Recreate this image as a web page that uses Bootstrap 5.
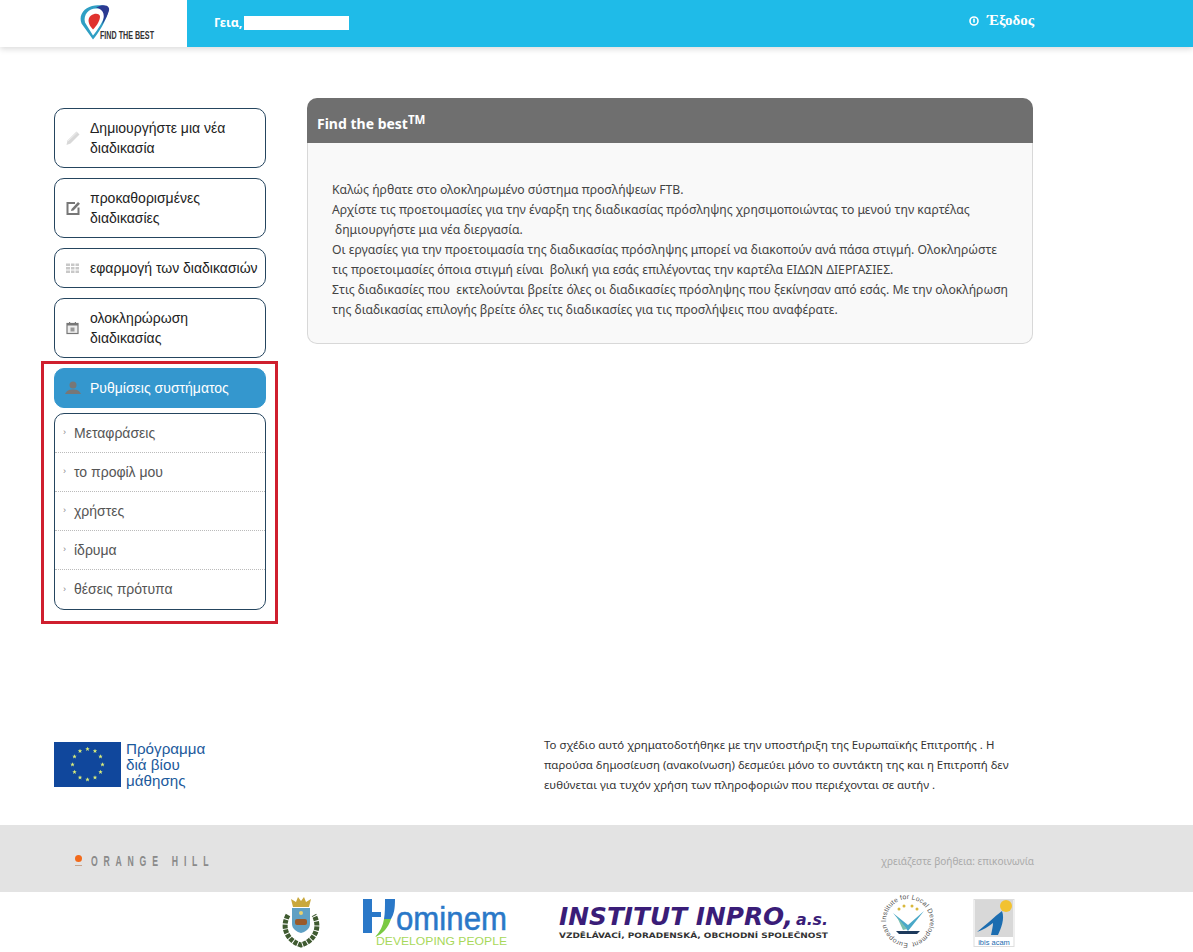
<!DOCTYPE html>
<html lang="el">
<head>
    <meta charset="UTF-8">
    <title>Find the best</title>
    <meta name="viewport" content="width=device-width, initial-scale=1">
    <link href="https://cdn.jsdelivr.net/npm/bootstrap@5.3.3/dist/css/bootstrap.min.css" rel="stylesheet">
    <style>
        body { background: #fff; font-family: "Liberation Sans", Arial, sans-serif; color: #333; }
        .top-bar { height: 47px; background: #1fbbe8; box-shadow: 0 2px 6px rgb(0 0 0 / 0.15); }
        .top-logo { width: 187px; background: #fff; padding-left: 79px; }
        .top-hello { padding: 0 0 2px 27px; width: 782px; color: #fff; font: bold 12.5px "Noto Sans", sans-serif; }
        .hello-mask { width: 105px; height: 14px; background: #fff; margin-left: 2px; }
        .top-exit { color: #fff; font: bold 15px "Liberation Serif", serif; text-decoration: none; gap: 8px; padding-bottom: 6px; }
        .page-main { padding: 61px 0 0 54px; gap: 41px; height: 693px; }
        .side-col { width: 212px; }
        .side-link { border: 1px solid #25455f; border-radius: 10px; min-height: 40px; padding: 9px 8px 9px 10px; margin-top: 10px; color: #222; font-size: 14px; line-height: 20px; text-decoration: none; background: #fff; }
        .side-link:first-child { margin-top: 0; }
        .side-link.is-open { background: #3497ce; border-color: #3497ce; color: #fff; }
        .side-ico { width: 16px; flex: none; margin-right: 9px; }
        .side-group { position: relative; margin-top: 10px; }
        .side-group .side-link { margin-top: 0; }
        .red-box { position: absolute; left: -13px; right: -12px; top: -7px; bottom: -14px; border: 3px solid #cf1f2e; pointer-events: none; }
        .sub-menu { border: 1px solid #25455f; border-radius: 10px; margin-top: 5px; overflow: hidden; }
        .sub-item { height: 39px; padding-left: 19px; font-size: 14px; color: #555; border-bottom: 1px dotted #bbb; position: relative; text-decoration: none; }
        .sub-item:last-child { border-bottom: 0; }
        .sub-item::before { content: "›"; position: absolute; left: 8px; font-size: 9px; color: #888; }
        .info-panel { width: 726px; height: 246px; margin-top: -10px; }
        .info-head { height: 45px; background: #6f6f6f; color: #fff; padding: 0 10px; border-radius: 10px 10px 0 0; font: bold 14px/51px "Noto Sans", sans-serif; }
        .info-head sup { font-size: 11.5px; top: -5px; }
        .info-text { height: 201px; padding: 37px 23px 0 24px; border: 1px solid #d8d8d8; border-top: 0; border-radius: 0 0 10px 10px; background: #f9f9f9; font: 12.2px/20px "Noto Sans", sans-serif; color: #444; }
        .info-text p { margin: 0; }
        .lead-in { padding-left: 3px; }
        .eu-row { padding-left: 54px; height: 85px; }
        .eu-logo { width: 152px; height: 50px; flex: none; }
        .eu-text { width: 470px; margin-left: 338px; margin-top: -5px; font: 11.4px/20px "Noto Sans", sans-serif; color: #333; }
        .grey-band { height: 67px; background: #e3e3e3; padding: 0 159px 0 75px; }
        .oh-name { font: bold 14px "Liberation Sans", sans-serif; letter-spacing: 9.3px; color: #8a8a8a; display: inline-block; transform: scaleX(.62); transform-origin: left; padding-top: 4px; white-space: nowrap; }
        .oh-dot { width: 7px; height: 7px; border-radius: 50%; background: #f26a1b; margin-right: 9px; position: relative; flex: none; }
        .oh-dot::after { content: ""; position: absolute; left: 0; top: 10px; width: 7px; height: 1px; background: #c9a58c; }
        .help-link { font: 10px "Noto Sans", sans-serif; color: #aaa; text-decoration: none; padding-top: 4px; }
        .logo-row { height: 60px; }
    </style>
</head>
<body>
<!-- top bar -->
<div class="top-bar d-flex">
    <div class="top-logo d-flex align-items-start">
        <svg width="100" height="47" viewBox="0 0 100 47">
            <g transform="translate(0 2.5)">
                <path d="M14 37 L2.5 21 C-1 12 6 4 16 3 C24 2 31 3 29 10 C27 18 20 30 14 37Z" fill="#2f9fc4"/>
                <path d="M14 33 L6 20 C4 12 10 6 17 6 C24 6 28 7 26 12 C24 19 19 27 14 33Z" fill="#fff"/>
                <path d="M22 3 C29 2 32 5 29 11 C27 16 25 19 23 22 C26 14 26 7 17 5Z" fill="#2b3a92"/>
                <path d="M14 27 C9 22 8 16 12 13 C16 10 21 11 21 14 C21 18 18 23 14 27Z" fill="#e0322e"/>
            </g>
            <text x="21" y="39" font-family="Liberation Sans" font-size="10" font-weight="bold" fill="#333" textLength="54" lengthAdjust="spacingAndGlyphs">FIND THE BEST</text>
        </svg>
    </div>
    <div class="top-hello d-flex align-items-center">Γεια,<span class="hello-mask d-inline-block"></span></div>
    <a href="#" class="top-exit d-flex align-items-center">
        <svg width="10" height="10" viewBox="0 0 10 10"><circle cx="5" cy="5" r="4" fill="none" stroke="#fff" stroke-width="1.6"/><rect x="4.2" y="2.6" width="1.6" height="4" fill="#fff"/></svg>
        Έξοδος
    </a>
</div>

<div class="page-main d-flex">
    <div class="side-col">
        <div class="d-flex flex-column">
        <a href="#" class="side-link d-flex align-items-center">
            <svg class="side-ico" height="16" viewBox="0 0 16 16"><path d="M1.5 15 L2.5 10.5 L11.5 1.5 L14.5 4.5 L5.5 13.5Z" fill="#d8d8d8"/><path d="M3 11 L12 2.5" stroke="#eee"/></svg>
            <span>Δημιουργήστε μια νέα διαδικασία</span>
        </a>
        <a href="#" class="side-link d-flex align-items-center">
            <svg class="side-ico" height="16" viewBox="0 0 16 16"><path d="M10 3H2.5v11h11V7.5" fill="none" stroke="#777" stroke-width="2"/><path d="M6.5 9 L13 2 L15 3.8 L8.5 10.5 L6 11Z" fill="#777"/></svg>
            <span>προκαθορισμένες διαδικασίες</span>
        </a>
        <a href="#" class="side-link d-flex align-items-center">
            <svg class="side-ico" height="16" viewBox="0 0 16 16"><g fill="#c8c8c8"><rect x="1" y="3.5" width="13" height="2.5"/><rect x="1" y="7" width="13" height="2.5"/><rect x="1" y="10.5" width="13" height="2.5"/></g><g fill="#fff"><rect x="5" y="3" width="1" height="10"/><rect x="9.5" y="3" width="1" height="10"/></g></svg>
            <span class="text-nowrap">εφαρμογή των διαδικασιών</span>
        </a>
        <a href="#" class="side-link d-flex align-items-center">
            <svg class="side-ico" height="16" viewBox="0 0 16 16"><rect x="2" y="3.5" width="11" height="10" fill="#eee" stroke="#777" stroke-width="1.2"/><rect x="2" y="3" width="11" height="2.5" fill="#777"/><rect x="4" y="2" width="1.2" height="2" fill="#777"/><rect x="9.8" y="2" width="1.2" height="2" fill="#777"/><rect x="5.5" y="7.5" width="4" height="4" fill="#999"/></svg>
            <span>ολοκληρώρωση διαδικασίας</span>
        </a>
        </div>
        <div class="side-group">
            <a href="#" class="side-link is-open d-flex align-items-center">
                <svg class="side-ico" height="16" viewBox="0 0 16 16"><circle cx="8" cy="5" r="3.5" fill="#777"/><path d="M0 14 C2 10 5 9.5 8 9.5 C11 9.5 14 10 16 14Z" fill="#777"/></svg>
                <span>Ρυθμίσεις συστήματος</span>
            </a>
            <div class="sub-menu d-flex flex-column">
                <a href="#" class="sub-item d-flex align-items-center">Μεταφράσεις</a>
                <a href="#" class="sub-item d-flex align-items-center">το προφίλ μου</a>
                <a href="#" class="sub-item d-flex align-items-center">χρήστες</a>
                <a href="#" class="sub-item d-flex align-items-center">ίδρυμα</a>
                <a href="#" class="sub-item d-flex align-items-center">θέσεις πρότυπα</a>
            </div>
            <span class="red-box"></span>
        </div>
    </div>
    <div class="info-panel">
        <div class="info-head">Find the best<sup>TM</sup></div>
        <div class="info-text">
            <p>Καλώς ήρθατε στο ολοκληρωμένο σύστημα προσλήψεων FTB.</p>
            <p>Αρχίστε τις προετοιμασίες για την έναρξη της διαδικασίας πρόσληψης χρησιμοποιώντας το μενού την καρτέλας</p>
            <p class="lead-in">δημιουργήστε μια νέα διεργασία.</p>
            <p>Οι εργασίες για την προετοιμασία της διαδικασίας πρόσληψης μπορεί να διακοπούν ανά πάσα στιγμή. Ολοκληρώστε τις προετοιμασίες όποια στιγμή είναι&nbsp; βολική για εσάς επιλέγοντας την καρτέλα ΕΙΔΩΝ ΔΙΕΡΓΑΣΙΕΣ.</p>
            <p>Στις διαδικασίες που&nbsp; εκτελούνται βρείτε όλες οι διαδικασίες πρόσληψης που ξεκίνησαν από εσάς. Με την ολοκλήρωση της διαδικασίας επιλογής βρείτε όλες τις διαδικασίες για τις προσλήψεις που αναφέρατε.</p>
        </div>
    </div>
</div>

<div class="eu-row d-flex">
    <svg class="eu-logo" viewBox="0 0 152 50">
        <defs><path id="eu-star" d="M0 -2.2 L0.6 -0.7 L2.2 -0.7 L1 0.3 L1.4 2 L0 1 L-1.4 2 L-1 0.3 L-2.2 -0.7 L-0.6 -0.7Z" fill="#d9ec7a"/></defs>
        <rect x="0" y="2" width="67" height="45" fill="#10479c"/>
        <use href="#eu-star" x="33.5" y="9"/><use href="#eu-star" x="41" y="11"/><use href="#eu-star" x="46.5" y="16.5"/><use href="#eu-star" x="48.5" y="24.5"/><use href="#eu-star" x="46.5" y="32"/><use href="#eu-star" x="41" y="37.5"/><use href="#eu-star" x="33.5" y="39.5"/><use href="#eu-star" x="26" y="37.5"/><use href="#eu-star" x="20.5" y="32"/><use href="#eu-star" x="18.5" y="24.5"/><use href="#eu-star" x="20.5" y="16.5"/><use href="#eu-star" x="26" y="11"/>
        <g font-family="Liberation Sans" font-size="15.2" fill="#1c5a9c">
            <text x="72" y="14">Πρόγραμμα</text>
            <text x="72" y="30">διά βίου</text>
            <text x="72" y="46">μάθησης</text>
        </g>
    </svg>
    <div class="eu-text">Το σχέδιο αυτό χρηματοδοτήθηκε με την υποστήριξη της Ευρωπαϊκής Επιτροπής . Η παρούσα δημοσίευση (ανακοίνωση) δεσμεύει μόνο το συντάκτη της και η Επιτροπή δεν ευθύνεται για τυχόν χρήση των πληροφοριών που περιέχονται σε αυτήν .</div>
</div>

<div class="grey-band d-flex align-items-center justify-content-between">
    <div class="d-flex align-items-center"><span class="oh-dot"></span><span class="oh-name">ORANGE HILL</span></div>
    <a href="#" class="help-link">χρειάζεστε βοήθεια: επικοινωνία</a>
</div>

<!-- partner logos, coordinates are page pixels -->
<div class="logo-row">
    <svg class="d-block" width="1193" height="60" viewBox="0 892 1193 60">
        <!-- crest -->
        <path d="M288 915 C280 930 290 942 301 945 C312 942 322 930 314 915" fill="none" stroke="#3f5a30" stroke-width="5" stroke-dasharray="4 1"/>
        <path d="M292 908 h18 v16 c0 5 -5 8 -9 9 c-4 -1 -9 -4 -9 -9Z" fill="#5fa0c4"/>
        <rect x="295" y="919" width="12" height="6" rx="2" fill="#9a5a2a"/>
        <circle cx="301" cy="913" r="2" fill="#e8d070"/>
        <path d="M293 907 L291 899 L296 902 L298 897 L301 901 L304 897 L306 902 L311 899 L309 907Z" fill="#c9a83c"/>
        <!-- hominem -->
        <path d="M363 899 h9 v13 h9 v5 h-9 v16 h-9Z" fill="#2a78c8"/>
        <path d="M385 899 h10 c0 10 -1 15 -4 20 h-7 c1 -6 1 -12 1 -20Z" fill="#2a78c8"/>
        <path d="M384 919 h7 c-3 9 -8 15 -16 18 c5 -5 8 -11 9 -18Z" fill="#7ac943"/>
        <text x="396" y="930" font-family="Liberation Sans" font-size="33" fill="#2a78c8" stroke="#2a78c8" stroke-width=".5" textLength="111" lengthAdjust="spacingAndGlyphs">ominem</text>
        <text x="376" y="945" font-family="Liberation Sans" font-size="11" fill="#a8d85a" textLength="131" lengthAdjust="spacingAndGlyphs">DEVELOPING PEOPLE</text>
        <!-- inpro -->
        <text x="559" y="925" font-family="DejaVu Sans" font-size="24" font-weight="bold" font-style="italic" fill="#3a1d78" textLength="234" lengthAdjust="spacingAndGlyphs">INSTITUT INPRO,</text>
        <text x="796" y="925" font-family="DejaVu Sans" font-size="16" font-weight="bold" font-style="italic" fill="#3a1d78" textLength="32" lengthAdjust="spacingAndGlyphs">a.s.</text>
        <text x="559" y="938" font-family="DejaVu Sans" font-size="7.5" font-weight="bold" fill="#333" textLength="269" lengthAdjust="spacingAndGlyphs">VZDĚLÁVACÍ, PORADENSKÁ, OBCHODNÍ SPOLEČNOST</text>
        <!-- institute seal -->
        <defs><path id="seal-ring" d="M908 943 a22 22 0 1 1 .1 0"/></defs>
        <text font-family="Liberation Sans" font-size="6.8" fill="#555"><textPath href="#seal-ring" textLength="134">European Institute for Local Development</textPath></text>
        <path d="M893 913 L908 931 L924 911 L908 925Z" fill="#4aa8c8"/>
        <path d="M897 917 L907 929 L903 930Z" fill="#7ac0b0"/>
        <path d="M896 931 h24 l-3 3 h-18Z" fill="#1d3a5c"/>
        <g fill="#d9b83c"><circle cx="899" cy="909" r="1.5"/><circle cx="904" cy="906" r="1.5"/><circle cx="912" cy="906" r="1.5"/><circle cx="917" cy="909" r="1.5"/></g>
        <!-- ibis acam -->
        <rect x="974" y="899.5" width="40" height="47" fill="#fff" stroke="#ddd"/>
        <rect x="975" y="900" width="38" height="37" fill="#d8d8d8"/>
        <circle cx="1006" cy="906" r="6" fill="#f2c230"/>
        <path d="M977 932 C986 925 994 917 1002 911 C1005 919 1001 928 998 935 L991 935 C992 930 993 926 993 923 C988 927 983 930 977 932Z" fill="#1c6db0"/>
        <text x="994" y="945" font-family="Liberation Sans" font-size="7.5" fill="#1c6db0" text-anchor="middle">ibis acam</text>
    </svg>
</div>
</body>
</html>
